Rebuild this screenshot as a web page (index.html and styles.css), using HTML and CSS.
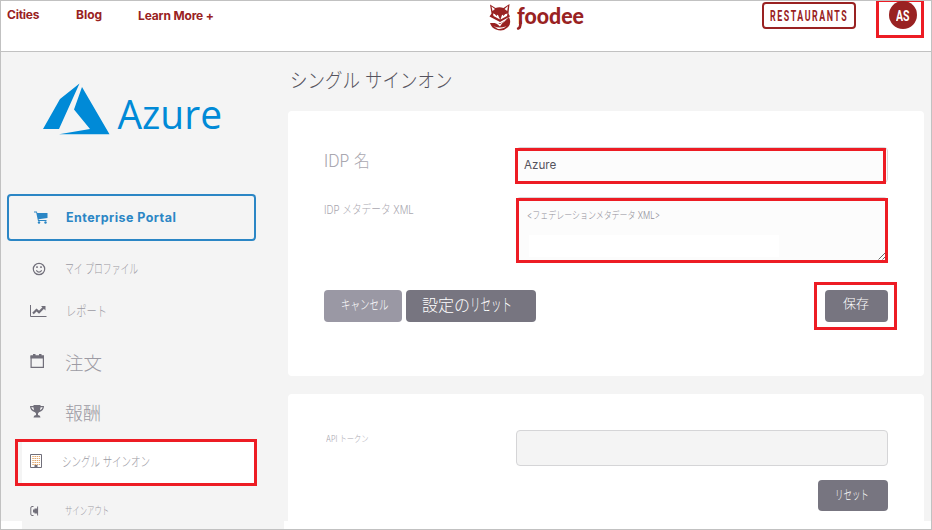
FILE: index.html
```html
<!DOCTYPE html>
<html lang="ja">
<head>
<meta charset="utf-8">
<title>Foodee</title>
<link rel="stylesheet" href="styles.css">
</head>
<body>
<div class="page">
  <header class="topbar">
    <nav class="links">
      <a class="link cities">Cities</a>
      <a class="link blog">Blog</a>
      <a class="link learn">Learn More +</a>
    </nav>
    <svg class="brand" viewBox="0 0 104 36" width="104" height="36">
      <path fill="#992222" d="M1 3.5 6.5 7Q10.500 5.500 14.500 7L20.500 3 19.500 12.500 21 15.500 11 21 0.500 15.500 2.500 12.500Z"/>
      <path fill="#fff" d="M2.500 5.500 6 8 3.500 10ZM19 5 15.500 8 18.200 10ZM4 12.500 9 14 11 18.500 4.500 15ZM18.500 12.500 13 14 11.500 18.500 18 15Z"/>
      <path fill="#992222" d="M5.500 12.500 8.500 13.500 7.500 15ZM16.500 12.500 13.500 13.500 14.500 15Z"/>
      <path fill="#992222" d="M1 22H12Q16 20.500 20 16 23 23 18.500 26.500 14 31 7 28.500 2.500 27 1 22Z"/>
      <path fill="#fff" d="M4 19 11 23 18 18.500 13 22.500 11 25.500Q8 22 3.500 21.500Z"/>
      <path fill="#fff" d="M4.500 25Q10 28 17.500 25.200 14 28.600 9 27.900Z"/>
      <text class="brand-name" x="28" y="23" textLength="67" lengthAdjust="spacingAndGlyphs">foodee</text>
      <path fill="none" stroke="#992222" stroke-width="2.800" stroke-linecap="round" d="M31.500 21Q31.500 27 29.200 27.500"/>
    </svg>
    <div class="actions">
      <a class="restaurants"><span>RESTAURANTS</span></a>
      <div class="account"><div class="avatar"><span>AS</span></div></div>
    </div>
  </header>
  <div class="body">
    <aside class="sidebar">
      <svg class="azure" viewBox="0 0 190 64" width="190" height="64">
        <path fill="#008ad7" d="M36.500 1.500 17 17 0 47H16ZM39 5 31 27.500 47 47 16 52.300H66.500Z"/>
        <text class="azure-name" x="74.500" y="46.500" textLength="104.500" lengthAdjust="spacingAndGlyphs">Azure</text>
      </svg>
      <a class="portal">
        <svg viewBox="0 0 14 13" width="14" height="13"><path fill="#2b86c5" d="M0 .500H2.800L3.300 2H13.500V7L4.600 8.200 4.800 9H12.500V10H4L2.200 1.500H0Z"/><circle cx="5" cy="11.500" r="1.200" fill="#2b86c5"/><circle cx="11.500" cy="11.500" r="1.200" fill="#2b86c5"/></svg>
        <span>Enterprise Portal</span>
      </a>
      <nav class="menu">
        <a class="item profile"><i><svg viewBox="0 0 14 14" width="14" height="14" fill="none" stroke="#716f7a" stroke-width="1.200"><circle cx="7" cy="7" r="5.700"/><path d="M4.300 8.300Q7 11.800 9.700 8.300"/><path d="M5 4.200V6M9 4.200V6" stroke-width="1.500"/></svg></i><span>マイ プロファイル</span></a>
        <a class="item report"><i><svg viewBox="0 0 18 14" width="18" height="14"><path fill="none" stroke="#716f7a" d="M.5 1V12.500H16.500"/><path fill="none" stroke="#716f7a" stroke-width="2.200" d="M3 9.500 6.500 6 9 8.200 13.500 3.700"/><path fill="#716f7a" d="M11 2H15.500V6.500Z"/></svg></i><span>レポート</span></a>
        <a class="item orders"><i><svg viewBox="0 0 15 15" width="15" height="15"><path fill="none" stroke="#716f7a" stroke-width="1.200" d="M1.100 2V13.400H13.400V2Z"/><path fill="#716f7a" d="M.5 1.500H14V4.500H.500ZM3 0H5.500V3H3ZM9 0H11.500V3H9Z"/></svg></i><span>注文</span></a>
        <a class="item rewards"><i><svg viewBox="0 0 14 13" width="14" height="13"><path fill="#716f7a" d="M3.500 0H10.500V1H14Q14 6 9 7.200L8 8.500V10Q10.500 10.300 10.500 12.500H3.500Q3.500 10.300 6 10V8.500L5 7.200Q0 6 0 1H3.500Z"/><path fill="#f4f4f4" d="M1.200 2.200H3.400L4.100 5.300Q1.800 4.300 1.200 2.200ZM12.800 2.200H10.600L9.900 5.300Q12.200 4.300 12.800 2.200Z"/></svg></i><span>報酬</span></a>
        <a class="item sso"><i><svg viewBox="0 0 12 14" width="12" height="14"><path fill="none" stroke="#716f7a" d="M.5 .5H11.500V13.500H.5Z"/><path stroke="#e3a86d" stroke-dasharray="1.500 .7" d="M2.300 2.500H10M2.300 4.500H10M2.300 6.500H10M2.300 8.500H10M2.300 10.500H10"/><path fill="#716f7a" d="M4.500 11H7.500V14H4.500Z"/></svg></i><span>シングル サインオン</span></a>
        <a class="item signout"><i><svg viewBox="0 0 9 10" width="9" height="10"><path fill="none" stroke="#716f7a" d="M3.500.5H2Q.8.500.8 2V8Q.8 9.500 2 9.500H3.500M7.600.5V9.500"/><path fill="#716f7a" d="M3 3.500H4.500V2.500H8V7.500H4.500V6.500H3Z"/></svg></i><span>サインアウト</span></a>
      </nav>
    </aside>
    <main class="main">
      <h1><span>シングル サインオン</span></h1>
      <section class="card settings">
        <div class="row name"><label><span>IDP 名</span></label><div class="field marked"><span>Azure</span></div></div>
        <div class="row meta"><label><span>IDP メタデータ XML</span></label>
          <div class="field marked area"><span>&lt;フェデレーションメタデータ XML&gt;</span><div class="blank"></div>
            <svg class="grip" viewBox="0 0 8 8" width="8" height="8"><path stroke="#555" stroke-width=".9" d="M.5 7.500 7.500.5M4.500 7.500 7.500 4.500"/></svg>
          </div></div>
        <div class="buttons">
          <button class="btn cancel"><span>キャンセル</span></button>
          <button class="btn reset-all"><span class="a">設定の</span><span class="b">リセット</span></button>
          <div class="save-mark"><button class="btn save"><span>保存</span></button></div>
        </div>
      </section>
      <section class="card token">
        <div class="row api"><label><span>API トークン</span></label><div class="field"></div></div>
        <button class="btn reset"><span>リセット</span></button>
      </section>
    </main>
  </div>
  <div class="foot left"></div><div class="foot right"></div>
</div>
</body>
</html>
```
FILE: styles.css
```css
* { box-sizing: border-box; }
body { margin: 0; font-family: Inter, "Noto Sans CJK JP", sans-serif; }
span { display: inline-block; white-space: nowrap; transform-origin: 0 50%; }
.page { position: relative; width: 932px; height: 530px; border: 1px solid #c1c1c1; overflow: hidden; background: #f4f4f4; }

.topbar { display: flex; height: 51px; background: #fff; border-bottom: 1px solid #c1c1c1; }
.links { display: flex; width: 488px; padding: 6px 0 0 6px; color: #992222; font-size: 12px; line-height: 15px; font-weight: 700; }
.cities { width: 69px; letter-spacing: -.25px; }
.blog { width: 62px; }
.learn { padding-top: 1px; letter-spacing: -.15px; }
.brand { margin-right: -8px; }
.brand-name { font: 900 23px Lato, sans-serif; fill: #992222; }
.actions { display: flex; flex: 1; }
.restaurants { width: 94px; height: 27px; margin: 1px 20px 0 177px; padding-left: 6px; border: 2px solid #992222; border-radius: 4px; color: #992222; font: 700 15.500px/24px Roboto, sans-serif; }
.restaurants span { transform: scaleX(.57); letter-spacing: 2.700px; }
.account { width: 48px; height: 37px; border: 3px solid #ed1c24; border-top-width: 1px; display: flex; justify-content: center; }
.avatar { width: 28px; height: 28px; margin: -1px 0 0 6px; border-radius: 14px; background: #992222; color: #fff; font: 700 15px/30px Roboto, sans-serif; padding-left: 7px; }
.avatar span { transform: scaleX(.7); }

.body { display: flex; height: 477px; }
.sidebar { width: 287px; padding: 30px 0 0 6px; }
.azure { display: block; margin: 0 0 48px 36px; }
.azure-name { font: 400 41px "Open Sans", sans-serif; fill: #008ad7; }
.portal { display: flex; align-items: center; width: 249px; height: 47px; padding-left: 25px; border: 2px solid #2b86c5; border-radius: 4px; color: #2b86c5; font-size: 12.500px; font-weight: 700; letter-spacing: .45px; }
.portal span { margin-left: 18px; }
.menu { display: flex; flex-direction: column; }
.item { display: flex; align-items: center; height: 54px; padding-left: 23px; color: #9c9aa3; font-weight: 300; line-height: 20px; }
.item i { display: flex; width: 35px; }
.profile i { padding-left: 2px; padding-top: 1px; }
.profile span { font-size: 13px; transform: scaleX(.68); margin-top: -1px; }
.report { height: 32px; }
.report span { font-size: 13.500px; transform: scaleX(.76); margin-left: 1px; }
.orders { height: 70px; }
.orders i { margin-top: -2px; }
.orders span { font-size: 18.500px; padding-top: 2px; }
.rewards { height: 42px; padding-bottom: 12px; }
.rewards i { margin-top: -2px; }
.rewards span { font-size: 18px; padding-top: 4px; }
.sso { width: 242px; height: 47px; margin-left: 8px; padding-left: 12px; border: 3px solid #ed1c24; background: linear-gradient(90deg, #f4f4f4 4px, #fff 4px); padding-bottom: 3px; }
.sso i { width: 32px; }
.sso span { font-size: 13px; transform: scaleX(.73); }
.signout { height: 50px; }
.signout span { font-size: 11px; transform: scaleX(.67); margin-top: -1px; }

.main { width: 636px; }
h1 { height: 59px; margin: 0; padding: 15px 0 0 2px; color: #55535d; font-size: 20px; line-height: 29px; font-weight: 300; }
h1 span { transform: scaleX(.875); }
.card { background: #fff; border-radius: 4px; padding: 0 36px; }
.settings { height: 265px; padding-top: 36px; margin-bottom: 18px; }
.token { height: 150px; padding-top: 36px; }
.row { display: flex; }
.row label { width: 192px; color: #aaa8b0; font-weight: 300; }
.field { position: relative; width: 372px; height: 36px; border: 1px solid #d8d8da; border-radius: 4px; background: #fcfcfc; }
.marked::after { content: ""; position: absolute; inset: 0 1px -2px -2px; border: 3px solid #ed1c24; }
.name { height: 50px; }
.name label span { font-size: 17px; line-height: 28px; transform: scaleX(.93); }
.name .field { padding: 8px 7px; font-size: 12px; line-height: 18px; color: #55535d; }
.name .field span { transform: scaleX(.97); }
.meta label span { font-size: 12px; line-height: 26px; transform: scaleX(.805); }
.area { height: 65px; padding: 5px 10px; color: #918f99; font-weight: 300; }
.area span { font-size: 10.500px; line-height: 18px; transform: scaleX(.76); }
.area::after { inset: 0 -1px -2px -1px; }
.blank { width: 250px; height: 22px; margin: 10px 0 0 2px; background: #fff; }
.grip { position: absolute; right: 1px; bottom: 1px; }
.buttons { display: flex; padding-top: 28px; }
.btn { height: 32px; padding: 0 0 5px; border: 0; border-radius: 4px; background: #777580; color: #fff; font-family: "Noto Sans CJK JP", sans-serif; font-weight: 300; text-align: left; line-height: 24px; }
.cancel { width: 78px; margin-right: 4px; padding-left: 17px; background: #9a98a4; font-size: 13px; }
.cancel span { transform: scaleX(.73); }
.reset-all { width: 130px; padding-left: 16px; padding-bottom: 4px; font-size: 16px; white-space: nowrap; }
.reset-all .b { font-size: 17.500px; transform: scaleX(.6); }
.save-mark { height: 48px; margin: -8px -9px 0 auto; padding: 5px 6px 0 8px; border: 3px solid #ed1c24; }
.save { width: 63px; padding: 0 0 7px 18px; font-size: 13px; display: block; }
.api label span { font-size: 9px; line-height: 16px; margin: 1px 0 0 2px; transform: scaleX(.81); transform-origin: 0 50%; display: block; }
.api .field { background: #f4f4f4; border-color: #d5d5d7; }
.reset { display: block; width: 70px; height: 31px; margin: 14px 0 0 auto; padding: 0 0 3px 17px; font-size: 13px; }
.reset span { transform: scaleX(.65); }
.foot { position: absolute; bottom: 0; height: 8px; background: #fff; }
.foot.left { left: 0; width: 21px; }
.foot.right { left: 283px; right: 0; }
```
